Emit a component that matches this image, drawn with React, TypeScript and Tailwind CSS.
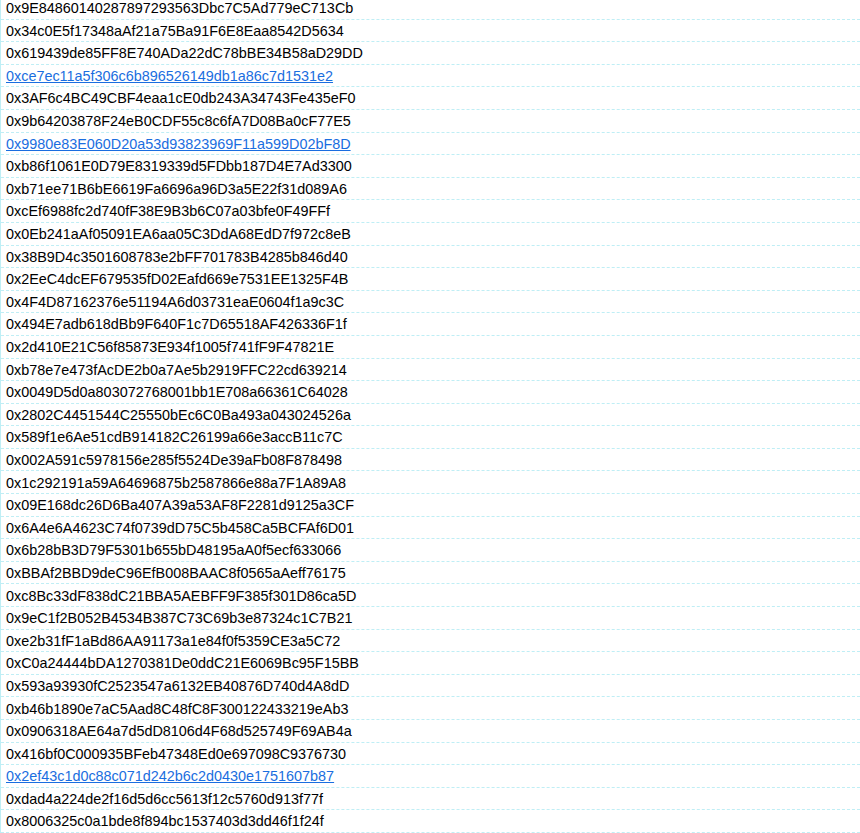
import React from 'react';

type Row = { addr: string; link?: boolean };

const ROWS: Row[] = [
  { addr: '0x9E84860140287897293563Dbc7C5Ad779eC713Cb' },
  { addr: '0x34c0E5f17348aAf21a75Ba91F6E8Eaa8542D5634' },
  { addr: '0x619439de85FF8E740ADa22dC78bBE34B58aD29DD' },
  { addr: '0xce7ec11a5f306c6b896526149db1a86c7d1531e2', link: true },
  { addr: '0x3AF6c4BC49CBF4eaa1cE0db243A34743Fe435eF0' },
  { addr: '0x9b64203878F24eB0CDF55c8c6fA7D08Ba0cF77E5' },
  { addr: '0x9980e83E060D20a53d93823969F11a599D02bF8D', link: true },
  { addr: '0xb86f1061E0D79E8319339d5FDbb187D4E7Ad3300' },
  { addr: '0xb71ee71B6bE6619Fa6696a96D3a5E22f31d089A6' },
  { addr: '0xcEf6988fc2d740fF38E9B3b6C07a03bfe0F49FFf' },
  { addr: '0x0Eb241aAf05091EA6aa05C3DdA68EdD7f972c8eB' },
  { addr: '0x38B9D4c3501608783e2bFF701783B4285b846d40' },
  { addr: '0x2EeC4dcEF679535fD02Eafd669e7531EE1325F4B' },
  { addr: '0x4F4D87162376e51194A6d03731eaE0604f1a9c3C' },
  { addr: '0x494E7adb618dBb9F640F1c7D65518AF426336F1f' },
  { addr: '0x2d410E21C56f85873E934f1005f741fF9F47821E' },
  { addr: '0xb78e7e473fAcDE2b0a7Ae5b2919FFC22cd639214' },
  { addr: '0x0049D5d0a803072768001bb1E708a66361C64028' },
  { addr: '0x2802C4451544C25550bEc6C0Ba493a043024526a' },
  { addr: '0x589f1e6Ae51cdB914182C26199a66e3accB11c7C' },
  { addr: '0x002A591c5978156e285f5524De39aFb08F878498' },
  { addr: '0x1c292191a59A64696875b2587866e88a7F1A89A8' },
  { addr: '0x09E168dc26D6Ba407A39a53AF8F2281d9125a3CF' },
  { addr: '0x6A4e6A4623C74f0739dD75C5b458Ca5BCFAf6D01' },
  { addr: '0x6b28bB3D79F5301b655bD48195aA0f5ecf633066' },
  { addr: '0xBBAf2BBD9deC96EfB008BAAC8f0565aAeff76175' },
  { addr: '0xc8Bc33dF838dC21BBA5AEBFF9F385f301D86ca5D' },
  { addr: '0x9eC1f2B052B4534B387C73C69b3e87324c1C7B21' },
  { addr: '0xe2b31fF1aBd86AA91173a1e84f0f5359CE3a5C72' },
  { addr: '0xC0a24444bDA1270381De0ddC21E6069Bc95F15BB' },
  { addr: '0x593a93930fC2523547a6132EB40876D740d4A8dD' },
  { addr: '0xb46b1890e7aC5Aad8C48fC8F300122433219eAb3' },
  { addr: '0x0906318AE64a7d5dD8106d4F68d525749F69AB4a' },
  { addr: '0x416bf0C000935BFeb47348Ed0e697098C9376730' },
  { addr: '0x2ef43c1d0c88c071d242b6c2d0430e1751607b87', link: true },
  { addr: '0xdad4a224de2f16d5d6cc5613f12c5760d913f77f' },
  { addr: '0x8006325c0a1bde8f894bc1537403d3dd46f1f24f' },
];

export default function App() {
  return (
    <div className="h-[833px] overflow-hidden bg-white font-['Liberation_Sans',Arial,sans-serif]">
      <ul className="-mt-[3px] border-l border-[#bfeef5]">
        {ROWS.map((row, idx) => (
          <li
            key={idx}
            className="flex h-[22.6px] items-center border-b border-dashed border-[#bfeef5] pl-[5px] pt-[1px] text-[14.4px] leading-none text-black"
          >
            {row.link ? (
              <a href="#" className="text-[#1a6ee0] underline">
                {row.addr}
              </a>
            ) : (
              <span>{row.addr}</span>
            )}
          </li>
        ))}
      </ul>
    </div>
  );
}
